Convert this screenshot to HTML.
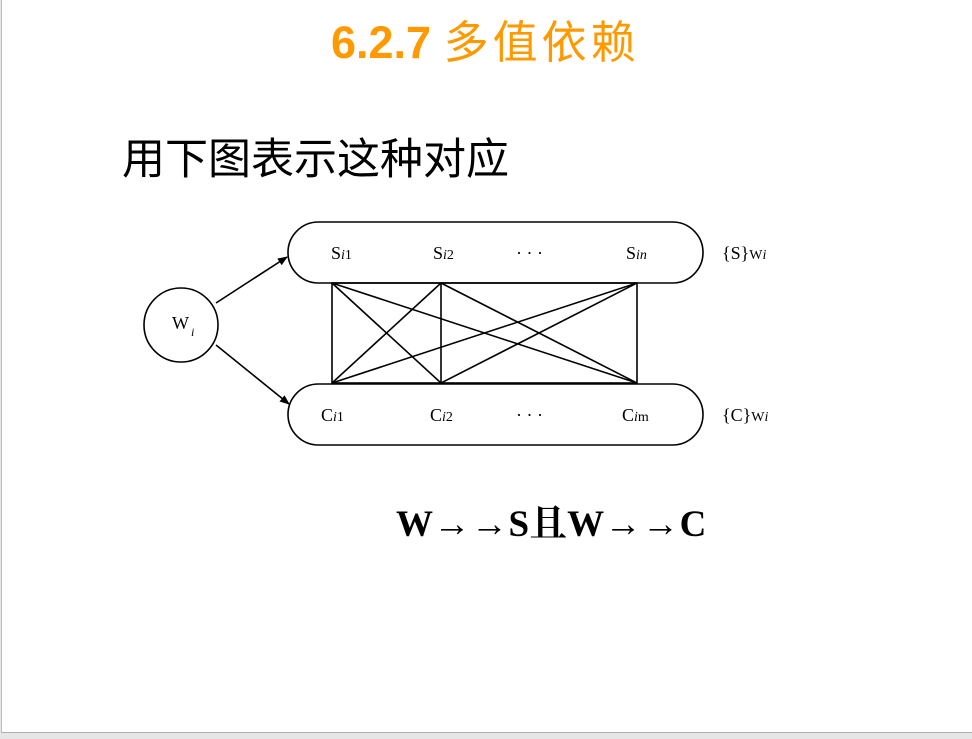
<!DOCTYPE html>
<html><head><meta charset="utf-8"><style>
html,body{margin:0;padding:0;}
body{width:972px;height:739px;background:#e6e6e6;position:relative;overflow:hidden;}
#slide{position:absolute;left:1px;top:0;width:971px;height:732px;background:#fff;border-left:1px solid #bbb;border-bottom:1px solid #b0b0b0;}
.t{position:absolute;white-space:nowrap;}
</style></head><body>
<div id="slide"></div>
<div class="t" style="left:331px;top:6px;font-size:45px;color:#f90;font-family:'Liberation Sans','Noto Sans CJK SC',sans-serif;"><b>6.2.7</b> <span style="letter-spacing:4px;font-size:45px">多值依赖</span></div>
<div class="t" style="left:122px;top:125px;font-size:43px;color:#000;font-family:'Liberation Sans','Noto Sans CJK SC',sans-serif;">用下图表示这种对应</div>
<svg style="position:absolute;left:0;top:0" width="972" height="739" font-family="Liberation Serif,serif" font-size="18">
<defs><marker id="a" markerWidth="10" markerHeight="8" refX="9" refY="4" orient="auto" markerUnits="userSpaceOnUse"><path d="M0,0 L10,4 L0,8 Z"/></marker></defs>
<g fill="none" stroke="#000" stroke-width="1.6">
<rect x="288" y="222" width="415" height="61" rx="30.5"/>
<rect x="288" y="384" width="415" height="61" rx="30.5"/>
<circle cx="181" cy="325" r="37"/>
<rect x="332" y="283" width="305" height="100"/>
<line x1="441" y1="283" x2="441" y2="383"/>
<path d="M332,283 L441,383 M332,283 L637,383 M441,283 L332,383 M441,283 L637,383 M637,283 L332,383 M637,283 L441,383"/>
<line x1="216" y1="303" x2="287" y2="257" marker-end="url(#a)"/>
<line x1="216" y1="345" x2="289" y2="404" marker-end="url(#a)"/>
</g>
<text x="172" y="329">W</text><text x="191" y="336" font-size="12" font-style="italic">i</text>
<text x="331" y="259">S<tspan font-size="14"><tspan font-style="italic">i</tspan>1</tspan></text>
<text x="433" y="259">S<tspan font-size="14"><tspan font-style="italic">i</tspan>2</tspan></text>
<text x="516" y="259">· · ·</text>
<text x="626" y="259">S<tspan font-size="14" font-style="italic">in</tspan></text>
<text x="722" y="259">{S}<tspan font-size="14">W<tspan font-style="italic">i</tspan></tspan></text>
<text x="321" y="421">C<tspan font-size="14"><tspan font-style="italic">i</tspan>1</tspan></text>
<text x="430" y="421">C<tspan font-size="14"><tspan font-style="italic">i</tspan>2</tspan></text>
<text x="516" y="421">· · ·</text>
<text x="622" y="421">C<tspan font-size="14"><tspan font-style="italic">i</tspan>m</tspan></text>
<text x="722" y="421">{C}<tspan font-size="14">W<tspan font-style="italic">i</tspan></tspan></text>
</svg>
<div class="t" style="left:396px;top:493px;font-size:37px;font-weight:bold;letter-spacing:0.5px;color:#000;font-family:'Liberation Serif','Noto Serif CJK SC',serif;">W→→S且W→→C</div>
</body></html>
